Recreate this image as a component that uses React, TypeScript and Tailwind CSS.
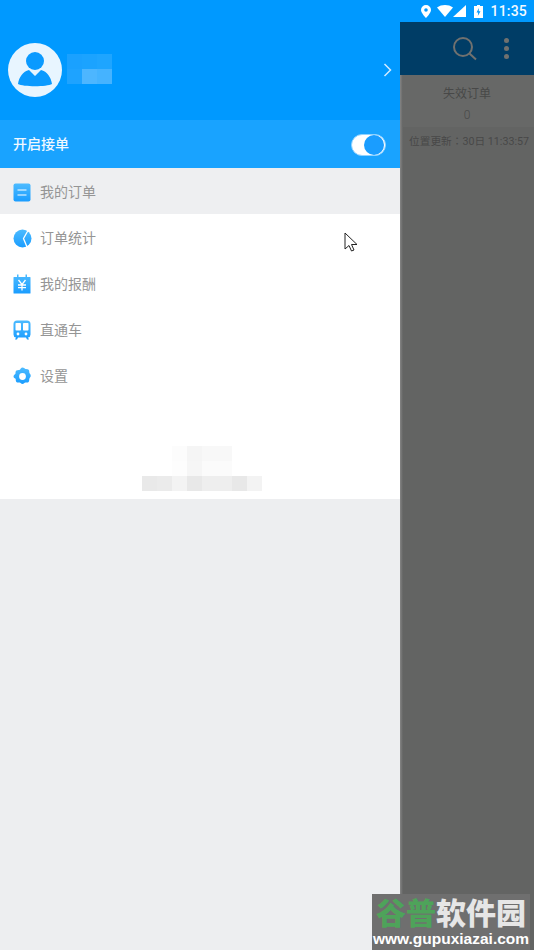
import React from "react";

const cjk = { fontFamily: '"Roboto", "Noto Sans CJK SC", sans-serif' };

function Grad({ id }: { id: string }) {
  return (
    <defs>
      <linearGradient id={id} x1="0" y1="0" x2="0" y2="1">
        <stop offset="0" stopColor="#4dbbff" />
        <stop offset="1" stopColor="#1a9dff" />
      </linearGradient>
    </defs>
  );
}

const icons: Record<string, React.ReactNode> = {
  orders: (
    <svg width="18" height="19" viewBox="0 0 18 19">
      <Grad id="g1" />
      <rect x="0.5" y="0.5" width="17" height="18" rx="2" fill="url(#g1)" />
      <path d="M4.500 7h9M4.500 12h9" stroke="#fff" strokeWidth="1.200" />
    </svg>
  ),
  stats: (
    <svg width="19" height="19" viewBox="0 0 19 19">
      <Grad id="g2" />
      <circle cx="9.500" cy="9.500" r="9" fill="url(#g2)" />
      <path d="M15 1.500L10.500 9.500 14 18" fill="none" stroke="#fff" strokeWidth="1.300" />
    </svg>
  ),
  pay: (
    <svg width="18" height="20" viewBox="0 0 18 20">
      <Grad id="g3" />
      <path d="M1 3h3V0.500h1.500V3h7V0.500H14V3h3a.5.5 0 0 1 .5.5V19a.5.5 0 0 1-.5.5H1a.5.5 0 0 1-.5-.5V3.500A.5.5 0 0 1 1 3z" fill="url(#g3)" />
      <path d="M5.500 6l3.500 4.500L12.500 6M5 11h8M5 13.700h8M9 10.500v6" stroke="#fff" strokeWidth="1.300" fill="none" />
    </svg>
  ),
  train: (
    <svg width="18" height="20" viewBox="0 0 18 20">
      <Grad id="g4" />
      <path d="M4 .5h10a3.500 3.500 0 0 1 3.500 3.500v10.500a3 3 0 0 1-2.500 3l1 2h-2l-1-2H5l-1 2H2l1-2a3 3 0 0 1-2.500-3V4A3.500 3.500 0 0 1 4 .5z" fill="url(#g4)" />
      <rect x="2.500" y="3" width="5.500" height="7.500" rx="0.800" fill="#fff" />
      <rect x="10" y="3" width="5.500" height="7.500" rx="0.800" fill="#fff" />
      <circle cx="5" cy="14" r="1.400" fill="#fff" />
      <circle cx="13" cy="14" r="1.400" fill="#fff" />
    </svg>
  ),
  gear: (
    <svg width="19" height="19" viewBox="0 0 18 18">
      <Grad id="g5" />
      <path d="M9 .5c1.300 0 1.800 1 2.800 1.300 1 .3 2-.2 3 .7.900.9.400 2 .7 3 .3 1 1.300 1.500 1.300 2.800s-1 1.800-1.300 2.800c-.3 1 .2 2-.7 3-1 .9-2 .4-3 .7-1 .3-1.500 1.300-2.800 1.300s-1.800-1-2.800-1.300c-1-.3-2 .2-3-.7-.9-1-.4-2-.7-3C2 11 .5 10.300.5 9S2 7.200 2.300 6.500c.3-1-.2-2.100.7-3 1-.9 2-.4 3-.7C7 2.500 7.700.5 9 .5z" fill="url(#g5)" />
      <circle cx="9" cy="9" r="3.200" fill="#fff" />
    </svg>
  ),
};

const items = [
  { icon: "orders", label: "我的订单", active: true },
  { icon: "stats", label: "订单统计" },
  { icon: "pay", label: "我的报酬" },
  { icon: "train", label: "直通车" },
  { icon: "gear", label: "设置" },
];

function Mosaic({ rows, size }: { rows: string[][]; size: number }) {
  return (
    <div className="flex flex-col">
      {rows.map((r, i) => (
        <div key={i} className="flex">
          {r.map((c, j) => (
            <div key={j} style={{ width: size, height: size, background: c }} />
          ))}
        </div>
      ))}
    </div>
  );
}

export default function App() {
  return (
    <div className="relative flex h-[950px] w-[534px] overflow-hidden bg-[#edeef0]" style={cjk}>
      <aside className="relative z-10 flex w-[400px] flex-col">
        <div className="flex h-[120px] items-center bg-[#0099ff] pt-[20px]">
          <div className="ml-2 flex h-[54px] w-[54px] items-center justify-center rounded-full bg-[#e8f5ff]">
            <svg width="36" height="38" viewBox="0 0 36 38">
              <circle cx="18" cy="10" r="9" fill="#0a9aff" />
              <path d="M12 19l6 6 6-6c6 1.500 10 7 11 14-5 3-29 3-34 0 1-7 5-12.500 11-14z" fill="#0a9aff" />
            </svg>
          </div>
          <div className="ml-[5px] mt-[-2px]">
            <Mosaic
              size={15}
              rows={[
                ["#1aa1ff", "#1ba3ff", "#1ea5ff"],
                ["#1ea3ff", "#4db6ff", "#45b3ff"],
              ]}
            />
          </div>
          <svg className="ml-auto mr-[8px]" width="9" height="14" viewBox="0 0 9 14">
            <path d="M1.500 1l6 6-6 6" fill="none" stroke="#cfeaff" strokeWidth="1.500" />
          </svg>
        </div>
        <div className="flex h-[48px] items-center justify-between bg-[#19a3ff] pl-[13px] pr-[14px] pt-[1px] text-[14px] font-medium text-[#f0f8ff]">
          <span>开启接单</span>
          <div className="flex h-[22px] w-[35px] items-center justify-end rounded-full border border-[#8fd2ff] bg-white pr-[1px]">
            <div className="h-[20px] w-[20px] rounded-full bg-[#1a9dff]" />
          </div>
        </div>
        <div className="flex flex-col bg-white">
          {items.map((it) => (
            <div
              key={it.label}
              className={`flex h-[46px] items-center pl-[13px] pt-[2px] text-[14px] text-[#959595] ${it.active ? "bg-[#eeeff1]" : ""}`}
            >
              <span className="flex w-[27px]">{icons[it.icon]}</span>
              <span>{it.label}</span>
            </div>
          ))}
          <div className="flex h-[101px] flex-col items-center pl-[4px] pt-[48px]">
            <Mosaic
              size={15}
              rows={[
                ["#ffffff", "#ffffff", "#fcfcfc", "#f5f5f5", "#f8f8f8", "#f8f8f8", "#ffffff", "#ffffff"],
                ["#ffffff", "#ffffff", "#fdfdfd", "#f6f6f6", "#fbfbfb", "#fbfbfb", "#ffffff", "#ffffff"],
                ["#e9e9e9", "#ebebeb", "#f3f3f3", "#e8e8e8", "#eeeeee", "#eeeeee", "#e8e8e8", "#f3f3f3"],
              ]}
            />
          </div>
        </div>
      </aside>

      <main className="flex flex-1 flex-col">
        <div className="flex h-[22px] items-center justify-end gap-[6px] bg-[#0099ff] pr-[7px] text-[14px] font-medium text-[#f2f9ff]">
          <svg width="10" height="13" viewBox="0 0 10 13">
            <path fillRule="evenodd" d="M5 0a5 5 0 0 1 5 5c0 3-5 8-5 8S0 8 0 5a5 5 0 0 1 5-5zm0 3.200a1.800 1.800 0 1 0 0 3.600 1.800 1.800 0 0 0 0-3.600z" fill="#fff" />
          </svg>
          <div className="flex items-center">
            <svg width="16" height="12" viewBox="0 0 16 12">
              <path d="M0 2.500C4.500-.8 11.500-.8 16 2.500L8 12z" fill="#fff" />
            </svg>
            <svg width="13" height="12" viewBox="0 0 13 12">
              <path d="M13 0v12H0z" fill="#fff" />
            </svg>
          </div>
          <svg className="ml-[2px]" width="9" height="13" viewBox="0 0 9 13">
            <path d="M3 0h3v1h3v12H0V1h3z" fill="#fff" />
            <path d="M5 3L2.500 7.500H4.200L3.800 11 6.500 6.200H4.700z" fill="#0099ff" />
          </svg>
          <span className="ml-[1px] tracking-[0.2px]">11:35</span>
        </div>
        <div className="flex h-[53px] items-center justify-end bg-[#003d66] pr-[25px]">
          <svg width="24" height="24" viewBox="0 0 24 24">
            <circle cx="10" cy="10" r="9" fill="none" stroke="#70716f" strokeWidth="2" />
            <path d="M16.500 16.500l6.500 6" stroke="#70716f" strokeWidth="2" />
          </svg>
          <div className="ml-[27px] flex flex-col gap-[3px]">
            <div className="h-[5px] w-[5px] rounded-full bg-[#70716f]" />
            <div className="h-[5px] w-[5px] rounded-full bg-[#70716f]" />
            <div className="h-[5px] w-[5px] rounded-full bg-[#70716f]" />
          </div>
        </div>
        <div className="relative flex flex-1 flex-col bg-[#636463] text-[#484848]">
          <div className="absolute inset-y-0 left-0 w-[3px] bg-gradient-to-r from-[#858585] to-[#636463]" />
          <div className="flex h-[52px] flex-col items-center bg-[#676867] pt-[9px] text-[12px] leading-[18px]">
            <span className="mt-[1px]">失效订单</span>
            <span className="mt-[3px] font-light">0</span>
          </div>
          <div
            className="pl-[9px] pt-[7px] text-[10.700px] leading-[16px] whitespace-nowrap"
            style={{ fontFamily: '"Roboto", "Noto Sans CJK TC", sans-serif' }}
          >
            位置更新：30日 11:33:57
          </div>
        </div>
      </main>

      <svg className="absolute left-[344px] top-[232px] z-20" width="14" height="20" viewBox="0 0 14 20">
        <path d="M1 1v16l4-3.500 2.500 5.500 2.500-1-2.500-5.500H13z" fill="#fff" stroke="#222" strokeWidth="1" />
      </svg>

      <div className="absolute bottom-0 left-[372px] z-20 flex h-[56px] w-[158px] flex-col items-center bg-[#6f6f6f] pt-[2px]">
        <div className="flex text-[30px] font-black leading-[35px] whitespace-nowrap">
          <span className="text-[#4ea35a]">谷普</span>
          <span className="text-[#e6e6e6]">软件园</span>
        </div>
        <div className="text-[15.500px] font-bold leading-[16px] text-white whitespace-nowrap" style={{ fontFamily: '"Liberation Sans", sans-serif' }}>
          www.gupuxiazai.com
        </div>
      </div>
    </div>
  );
}
